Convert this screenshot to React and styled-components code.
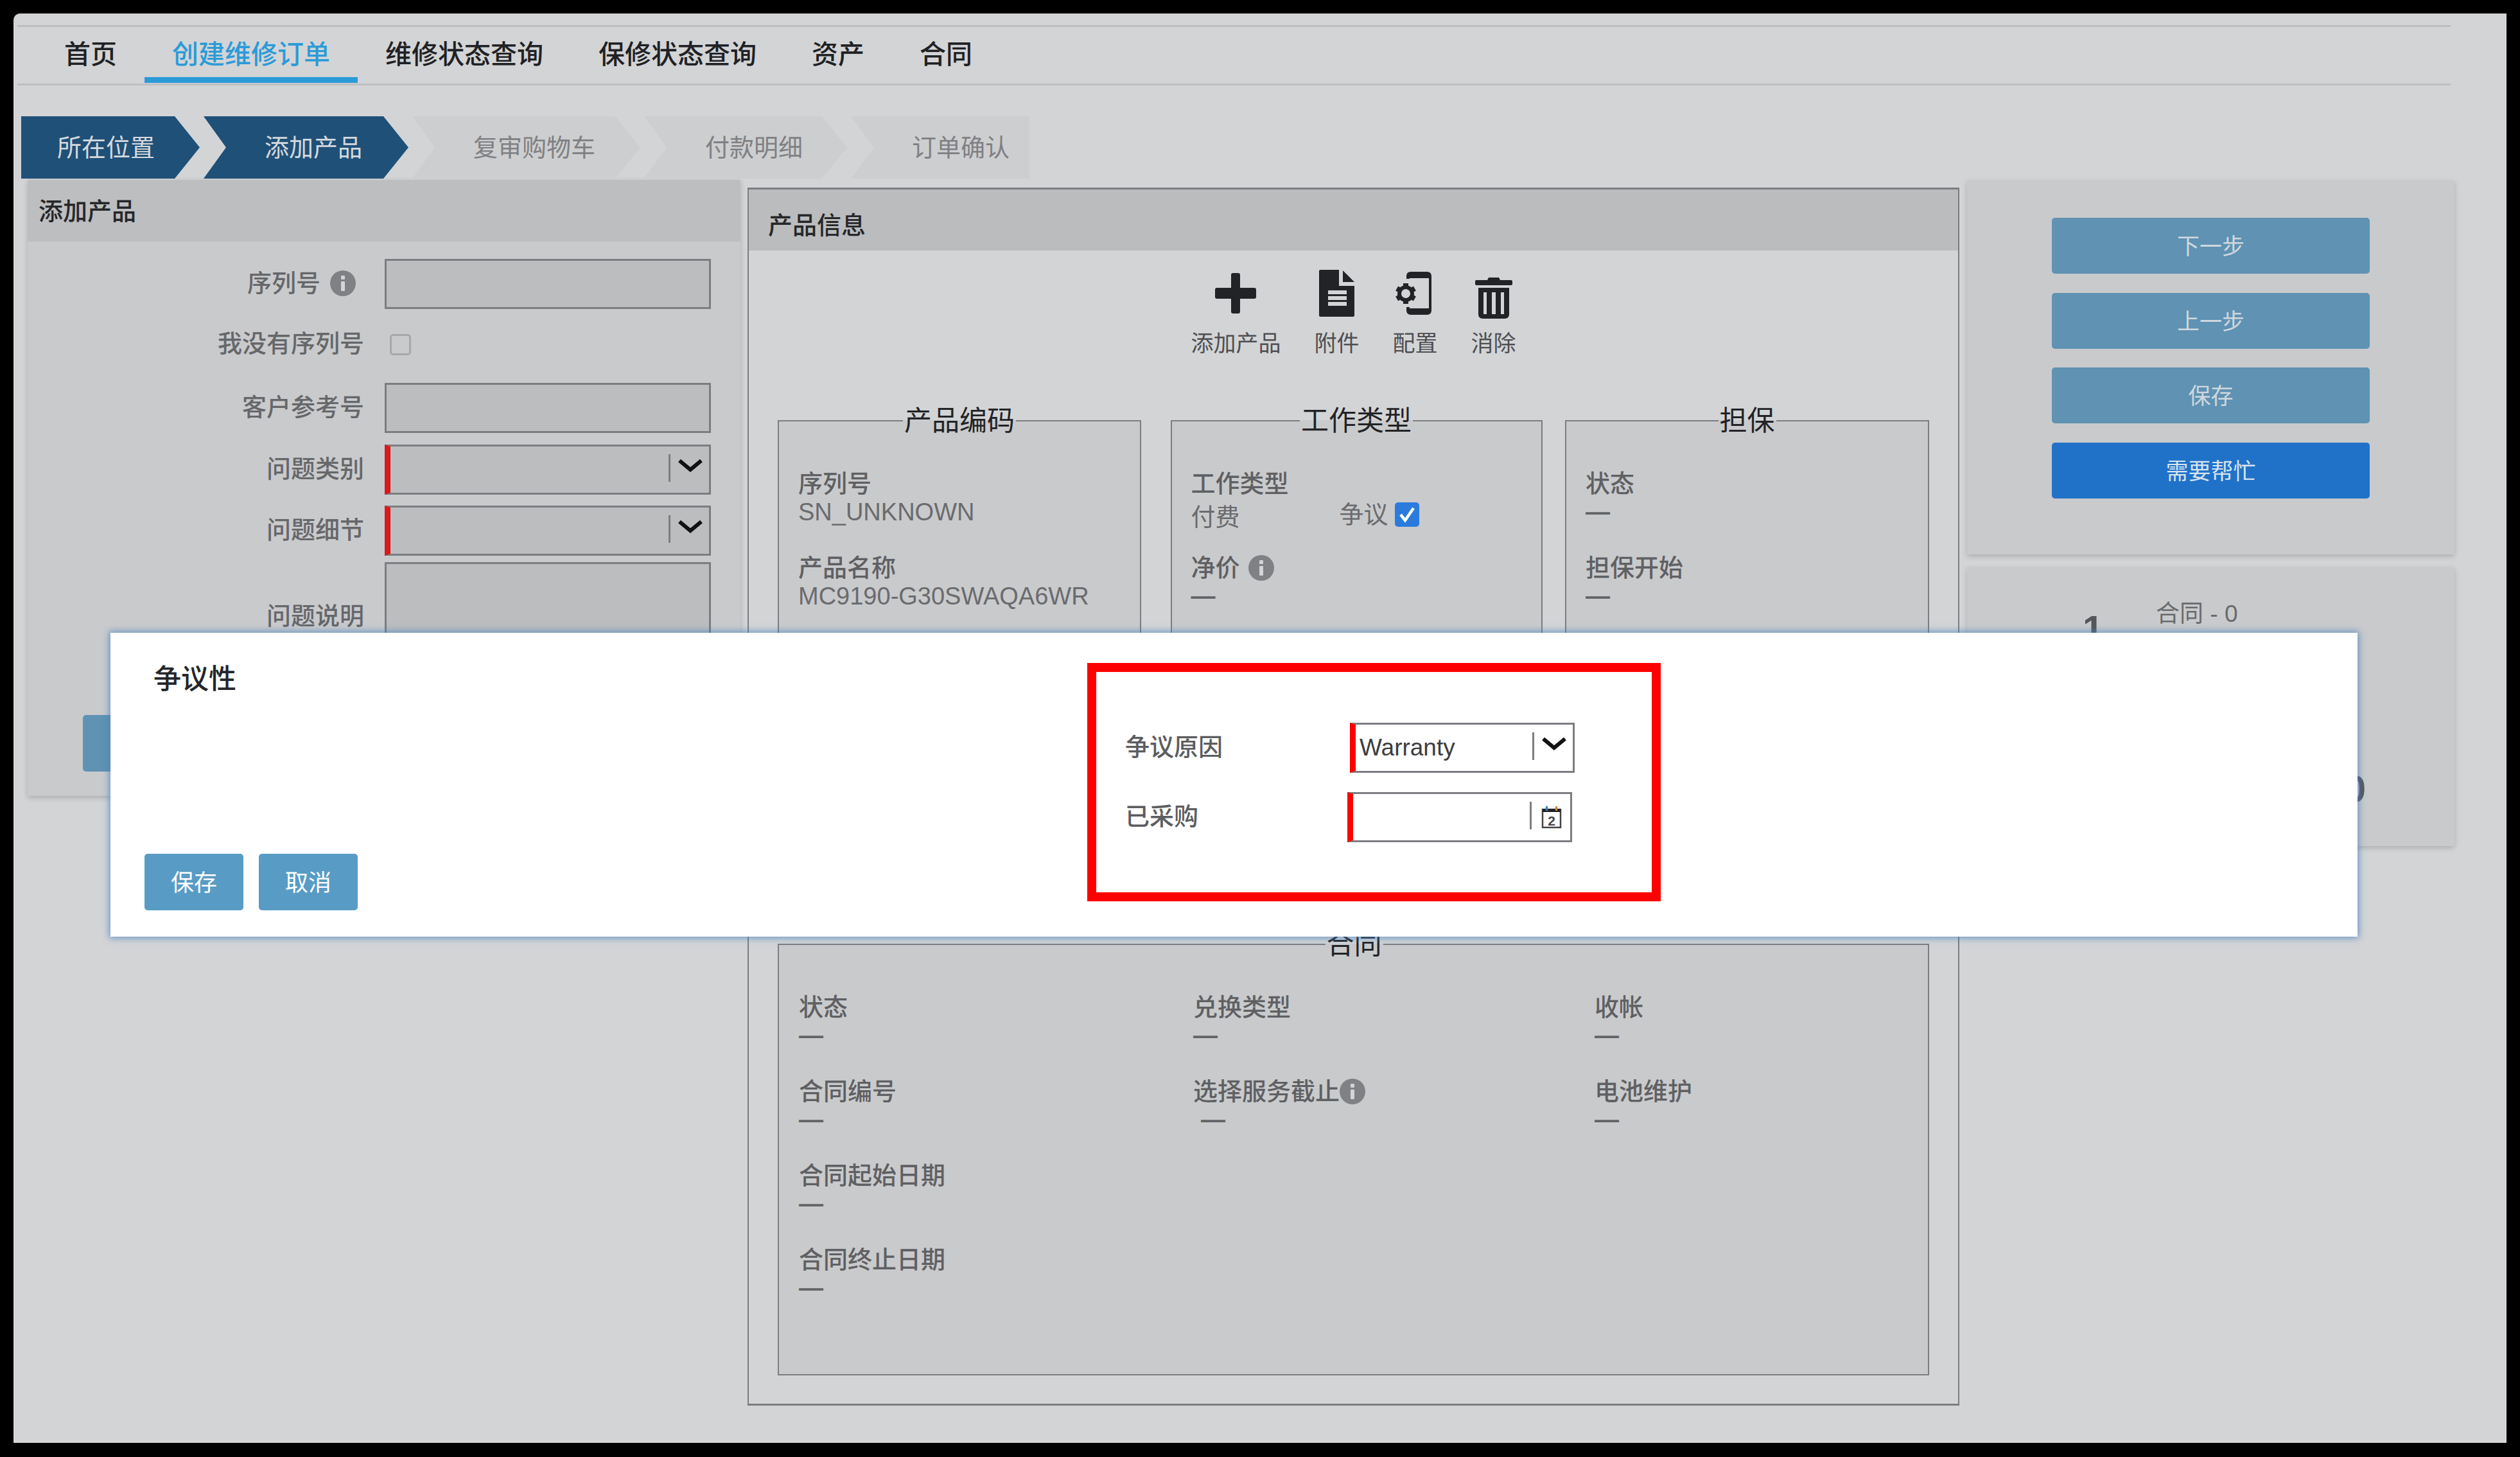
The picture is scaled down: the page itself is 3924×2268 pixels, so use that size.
import React from "react";
import styled, { createGlobalStyle } from "styled-components";

const GlobalStyle = createGlobalStyle`
  html, body {
    margin: 0;
    padding: 0;
    background: #000;
  }
  * {
    box-sizing: border-box;
  }
  body {
    font-family: "Liberation Sans", "Noto Sans CJK SC", sans-serif;
  }
`;

const tabs = ["首页", "创建维修订单", "维修状态查询", "保修状态查询", "资产", "合同"];

const steps = [
  { label: "所在位置", width: 278, active: true, first: true },
  { label: "添加产品", width: 319, active: true },
  { label: "复审购物车", width: 355 },
  { label: "付款明细", width: 316 },
  { label: "订单确认", width: 278, last: true },
];

const InfoIcon = () => (
  <InfoSvg viewBox="0 0 40 40">
    <circle cx="20" cy="20" r="20" fill="#808184" />
    <rect x="17" y="8" width="6" height="6" rx="1" fill="#d3d4d6" />
    <rect x="17" y="17" width="6" height="15" rx="1" fill="#d3d4d6" />
  </InfoSvg>
);

const Chevron = () => (
  <ChevronSvg viewBox="0 0 40 20">
    <polyline points="3,2 20,16 37,2" fill="none" stroke="#111" strokeWidth="6" />
  </ChevronSvg>
);

const CalendarIcon = () => (
  <CalendarSvg viewBox="0 0 32 36">
    <rect x="2" y="6" width="28" height="28" fill="#fff" stroke="#444" strokeWidth="2.5" />
    <rect x="2" y="5" width="28" height="5" fill="#222" />
    <rect x="7" y="1" width="3" height="7" fill="#3a7cc0" />
    <rect x="22" y="1" width="3" height="7" fill="#c98a3a" />
    <text x="16" y="31" textAnchor="middle" fontSize="21" fontWeight="700" fill="#444" fontFamily="Liberation Sans">
      2
    </text>
  </CalendarSvg>
);

const PlusIcon = () => (
  <ToolSvg width="64" viewBox="0 0 64 76">
    <g transform="translate(0 5)">
      <path
        fill="#222326"
        d="M25 3a3 3 0 0 1 3-3h8a3 3 0 0 1 3 3v20h22a3 3 0 0 1 3 3v11a3 3 0 0 1-3 3H39v20a3 3 0 0 1-3 3h-8a3 3 0 0 1-3-3V40H3a3 3 0 0 1-3-3V26a3 3 0 0 1 3-3h22z"
      />
    </g>
  </ToolSvg>
);

const DocIcon = () => (
  <ToolSvg width="55" viewBox="0 0 55 76">
    <path
      fill="#222326"
      fillRule="evenodd"
      d="M0 2Q0 0 2 0H31V25H55V71Q55 73 53 73H2Q0 73 0 71ZM14 32V38H43V32ZM14 41V47H43V41ZM14 50V56H43V50Z"
    />
    <path fill="#222326" d="M37 1L55 19H37Z" />
  </ToolSvg>
);

const ConfigIcon = () => (
  <ToolSvg width="62" viewBox="0 0 62 76">
    <g transform="translate(0 3)" fill="#222326">
      <path d="M17 11V7Q17 0 24 0H49Q56 0 56 7V60Q56 67 49 67H24Q17 67 17 60V55H22V57H52V10H22V11Z" />
      <g transform="translate(16 34)">
        <circle r="10" fill="none" stroke="#222326" strokeWidth="6" />
        {[0, 60, 120, 180, 240, 300].map((a) => (
          <rect key={a} x="-4" y="-16" width="8" height="7" transform={`rotate(${a})`} />
        ))}
      </g>
    </g>
  </ToolSvg>
);

const TrashIcon = () => (
  <ToolSvg width="58" viewBox="0 0 58 76">
    <g transform="translate(0 12)" fill="#222326">
      <path d="M21 0H37L39 4H56Q58 4 58 6V10Q58 12 56 12H2Q0 12 0 10V6Q0 4 2 4H19Z" />
      <path
        fillRule="evenodd"
        d="M5 16H53V57Q53 64 46 64H12Q5 64 5 57ZM13 23V57H18V23ZM26 23V57H32V23ZM40 23V57H45V23Z"
      />
    </g>
  </ToolSvg>
);

const CheckIcon = () => (
  <CheckSvg viewBox="0 0 38 38">
    <rect width="38" height="38" rx="5" fill="#2b7bdc" />
    <polyline points="9,19 16,28 29,9" fill="none" stroke="#fff" strokeWidth="4.5" />
  </CheckSvg>
);

const SelectBox = ({ value, dark }) => (
  <Select $dark={dark}>
    <SelectValue>{value}</SelectValue>
    <FieldDivider />
    <Chevron />
  </Select>
);

const Field = ({ label, value = "—", info, gap, indent }) => (
  <FieldBlock>
    <FieldLabel $gap={gap}>
      {label}
      {info && <InfoIcon />}
    </FieldLabel>
    <FieldValue $indent={indent} $dash={value === "—"}>
      {value}
    </FieldValue>
  </FieldBlock>
);

export default function App() {
  return (
    <Page>
      <GlobalStyle />
      <Screen>
        <TopRule />
        <Nav>
          {tabs.map((t, i) => (
            <Tab key={t} $active={i === 1}>
              {t}
            </Tab>
          ))}
        </Nav>

        <Steps>
          {steps.map((s) => (
            <Step key={s.label} $width={s.width} $active={s.active} $first={s.first} $last={s.last}>
              {s.label}
            </Step>
          ))}
        </Steps>

        <Columns>
          <LeftPanel>
            <PanelHead>添加产品</PanelHead>
            <FormBody>
              <FormRow>
                <FormLabel $info>
                  序列号
                  <InfoIcon />
                </FormLabel>
                <TextBox />
              </FormRow>
              <FormRow $mt={16}>
                <FormLabel>我没有序列号</FormLabel>
                <EmptyCheck />
              </FormRow>
              <FormRow $mt={21}>
                <FormLabel>客户参考号</FormLabel>
                <TextBox />
              </FormRow>
              <FormRow $mt={18}>
                <FormLabel>问题类别</FormLabel>
                <SelectBox dark />
              </FormRow>
              <FormRow $mt={17}>
                <FormLabel>问题细节</FormLabel>
                <SelectBox dark />
              </FormRow>
              <FormRow $mt={10} $top>
                <FormLabel $top>问题说明</FormLabel>
                <TextArea />
              </FormRow>
              <AddButton />
            </FormBody>
          </LeftPanel>

          <CenterPanel>
            <CenterHead>产品信息</CenterHead>
            <Toolbar>
              <Tool>
                <PlusIcon />
                <ToolLabel>添加产品</ToolLabel>
              </Tool>
              <Tool>
                <DocIcon />
                <ToolLabel>附件</ToolLabel>
              </Tool>
              <Tool>
                <ConfigIcon />
                <ToolLabel>配置</ToolLabel>
              </Tool>
              <Tool>
                <TrashIcon />
                <ToolLabel>消除</ToolLabel>
              </Tool>
            </Toolbar>

            <BoxRow>
              <Box>
                <BoxTitle>产品编码</BoxTitle>
                <Field label="序列号" value="SN_UNKNOWN" />
                <Field label="产品名称" value="MC9190-G30SWAQA6WR" />
              </Box>
              <Box $shift>
                <BoxTitle>工作类型</BoxTitle>
                <FieldBlock>
                  <FieldLabel>工作类型</FieldLabel>
                  <WorkRow>
                    <span>付费</span>
                    <Dispute>
                      争议
                      <CheckIcon />
                    </Dispute>
                  </WorkRow>
                </FieldBlock>
                <Field label="净价" info gap />
              </Box>
              <Box>
                <BoxTitle>担保</BoxTitle>
                <Field label="状态" />
                <Field label="担保开始" />
              </Box>
            </BoxRow>

            <ContractBox>
              <BoxTitle>合同</BoxTitle>
              <ContractGrid>
                <Field label="状态" />
                <Field label="兑换类型" />
                <Field label="收帐" />
                <Field label="合同编号" />
                <Field label="选择服务截止" info indent />
                <Field label="电池维护" />
                <Field label="合同起始日期" />
                <Spacer />
                <Spacer />
                <Field label="合同终止日期" />
              </ContractGrid>
            </ContractBox>
          </CenterPanel>

          <RightColumn>
            <ActionPanel>
              <ActionButton>下一步</ActionButton>
              <ActionButton>上一步</ActionButton>
              <ActionButton>保存</ActionButton>
              <ActionButton $help>需要帮忙</ActionButton>
            </ActionPanel>
            <SummaryPanel>
              <SummaryTop>
                <SummaryDigit>1</SummaryDigit>
                <SummaryLabel>合同 - 0</SummaryLabel>
              </SummaryTop>
              <SummaryBottom>0</SummaryBottom>
            </SummaryPanel>
          </RightColumn>
        </Columns>
      </Screen>

      <Modal>
        <ModalSide>
          <ModalTitle>争议性</ModalTitle>
          <ModalButtons>
            <ModalButton>保存</ModalButton>
            <ModalButton>取消</ModalButton>
          </ModalButtons>
        </ModalSide>
        <Highlight>
          <HighlightRow>
            <HighlightLabel>争议原因</HighlightLabel>
            <SelectBox value="Warranty" />
          </HighlightRow>
          <HighlightRow>
            <HighlightLabel>已采购</HighlightLabel>
            <DateBox>
              <SelectValue />
              <FieldDivider />
              <CalendarIcon />
            </DateBox>
          </HighlightRow>
        </Highlight>
      </Modal>
    </Page>
  );
}

const Page = styled.div`
  position: relative;
  width: 3924px;
  height: 2268px;
  padding: 21px 21px 22px 21px;
  background: #000;
  overflow: hidden;
`;
const Screen = styled.div`
  height: 100%;
  padding: 18px 0 0 6px;
  background: #d3d4d6;
  border-top-left-radius: 10px;
`;
const TopRule = styled.div`
  width: 3789px;
  height: 3px;
  background: #bdbec0;
`;
const Nav = styled.nav`
  display: flex;
  width: 3789px;
  padding: 0 0 1px 30px;
  border-bottom: 3px solid #bfc0c2;
`;
const Tab = styled.div`
  height: 87px;
  padding: 8px 43px 0;
  font-size: 41px;
  line-height: 70px;
  font-weight: 500;
  color: ${({ $active }) => ($active ? "#2b9bd8" : "#202124")};
  border-bottom: 9px solid ${({ $active }) => ($active ? "#2b9bd8" : "transparent")};
`;
const Steps = styled.div`
  display: flex;
  gap: 6px;
  height: 97px;
  margin: 48px 0 0 6px;
`;
const Step = styled.div`
  display: flex;
  align-items: center;
  width: ${({ $width }) => $width}px;
  padding-left: ${({ $first }) => ($first ? 56 : 95)}px;
  padding-bottom: 6px;
  font-size: 38px;
  color: ${({ $active }) => ($active ? "#d5d9de" : "#7f8083")};
  background: ${({ $active }) => ($active ? "#1f5078" : "#cdced0")};
  clip-path: ${({ $first, $last }) =>
    $first
      ? "polygon(0 0, calc(100% - 39px) 0, 100% 50%, calc(100% - 39px) 100%, 0 100%)"
      : $last
      ? "polygon(0 0, 100% 0, 100% 100%, 0 100%, 36px 50%)"
      : "polygon(0 0, calc(100% - 39px) 0, 100% 50%, calc(100% - 39px) 100%, 0 100%, 35px 50%)"};
`;
const Columns = styled.div`
  display: flex;
  align-items: flex-start;
  margin: 2px 0 0 16px;
`;
const LeftPanel = styled.section`
  width: 1110px;
  background: #c9cacc;
  box-shadow: 0 3px 8px rgba(0, 0, 0, 0.18);
`;
const PanelHead = styled.div`
  display: flex;
  align-items: center;
  height: 96px;
  padding: 0 0 6px 17px;
  font-size: 38px;
  font-weight: 500;
  color: #26272a;
  background: #bdbec0;
`;
const FormBody = styled.div`
  display: flex;
  flex-direction: column;
  padding: 27px 0 38px;
`;
const FormRow = styled.div`
  display: flex;
  align-items: ${({ $top }) => ($top ? "flex-start" : "center")};
  height: ${({ $top }) => ($top ? "200px" : "78px")};
  margin-top: ${({ $mt }) => $mt || 0}px;
`;
const FormLabel = styled.div`
  display: flex;
  align-items: center;
  justify-content: flex-end;
  gap: 15px;
  width: ${({ $info }) => ($info ? 511 : 524)}px;
  margin-top: ${({ $top }) => ($top ? 62 : 0)}px;
  margin-right: ${({ $info }) => ($info ? 45 : 32)}px;
  padding-bottom: 3px;
  font-size: 38px;
  line-height: 44px;
  font-weight: 500;
  color: #66676a;
`;
const TextBox = styled.div`
  width: 508px;
  height: 78px;
  background: #bcbdbf;
  border: 3px solid #7b7d81;
`;
const TextArea = styled(TextBox)`
  height: 200px;
`;
const EmptyCheck = styled.div`
  width: 33px;
  height: 33px;
  margin-left: 8px;
  border: 3px solid #a7a8ab;
  border-radius: 5px;
`;
const AddButton = styled.div`
  width: 300px;
  height: 88px;
  margin: 38px 0 0 86px;
  background: #5f92b3;
  border-radius: 5px;
`;
const InfoSvg = styled.svg`
  flex: none;
  width: 40px;
  height: 40px;
`;
const CenterPanel = styled.section`
  width: 1887px;
  margin: 12px 0 0 11px;
  padding-bottom: 44px;
  border: 3px solid #7b7d81;
  border-width: 3px 2px 3px 2px;
`;
const CenterHead = styled.div`
  display: flex;
  align-items: center;
  height: 95px;
  padding: 9px 0 0 30px;
  font-size: 38px;
  font-weight: 500;
  color: #26272a;
  background: #bbbcbe;
`;
const Toolbar = styled.div`
  display: flex;
  justify-content: center;
  gap: 52px;
  padding-top: 30px;
`;
const Tool = styled.div`
  display: flex;
  flex-direction: column;
  align-items: center;
  gap: 17px;
  min-width: 70px;
`;
const ToolSvg = styled.svg`
  display: block;
  height: 76px;
`;
const ToolLabel = styled.div`
  font-size: 35px;
  line-height: 44px;
  color: #4e4f52;
`;
const BoxRow = styled.div`
  display: grid;
  grid-template-columns: 566px 579px 567px;
  justify-content: space-between;
  height: 797px;
  margin: 76px 45px 0;
`;
const Box = styled.fieldset`
  min-width: 0;
  margin: 0 ${({ $shift }) => ($shift ? "-5px 0 5px" : "0")};
  padding: 54px 30px 0;
  background: #c9cacc;
  border: 2px solid #7b7d81;
`;
const BoxTitle = styled.legend`
  margin: 0 auto;
  padding: 0 2px;
  font-size: 43px;
  line-height: 44px;
  color: #222326;
`;
const FieldBlock = styled.div`
  margin-bottom: 43px;
`;
const FieldLabel = styled.div`
  display: flex;
  align-items: center;
  gap: ${({ $gap }) => ($gap ? 13 : 0)}px;
  font-size: 38px;
  line-height: 44px;
  height: 44px;
  font-weight: 500;
  color: #5f6063;
  white-space: nowrap;
`;
const FieldValue = styled.div`
  margin-left: ${({ $indent }) => ($indent ? 12 : 0)}px;
  font-size: 38px;
  line-height: 44px;
  height: 44px;
  font-weight: ${({ $dash }) => ($dash ? 700 : 400)};
  color: ${({ $dash }) => ($dash ? "#636467" : "#6a6b6e")};
  white-space: nowrap;
`;
const WorkRow = styled(FieldValue)`
  display: grid;
  grid-template-columns: 231px auto;
  margin-top: 8px;
  margin-bottom: -8px;
`;
const Dispute = styled.span`
  display: flex;
  align-items: center;
  gap: 10px;
  margin-top: -8px;
`;
const CheckSvg = styled.svg`
  width: 38px;
  height: 38px;
`;
const ContractBox = styled(Box)`
  display: block;
  height: 693px;
  margin: 18px 45px 0;
  padding: 54px 29px 0 31px;
`;
const ContractGrid = styled.div`
  display: grid;
  grid-template-columns: 614px 625px 1fr;
`;
const Spacer = styled.div``;
const RightColumn = styled.div`
  display: flex;
  flex-direction: column;
  gap: 20px;
  width: 759px;
  margin: 1px 0 0 12px;
`;
const ActionPanel = styled.section`
  display: flex;
  flex-direction: column;
  align-items: center;
  gap: 29.5px;
  padding: 58px 0 87px;
  background: #c9cacc;
  box-shadow: 0 3px 8px rgba(0, 0, 0, 0.18);
`;
const ActionButton = styled.div`
  display: flex;
  align-items: center;
  justify-content: center;
  width: 495px;
  height: 87px;
  padding-bottom: 4px;
  font-size: 35px;
  color: ${({ $help }) => ($help ? "#d8e4f0" : "#cfd8de")};
  background: ${({ $help }) => ($help ? "#2072c8" : "#5f92b3")};
  border-radius: 5px;
`;
const SummaryPanel = styled.section`
  height: 434px;
  padding: 51px 138px 54px 180px;
  background: #c9cacc;
  box-shadow: 0 3px 8px rgba(0, 0, 0, 0.18);
`;
const SummaryTop = styled.div`
  display: flex;
  height: 80px;
`;
const SummaryDigit = styled.div`
  width: 114px;
  margin-top: 10px;
  font-size: 58px;
  line-height: 70px;
  font-weight: 700;
  color: #55565a;
`;
const SummaryLabel = styled.div`
  font-size: 37px;
  line-height: 44px;
  color: #6a6b6e;
`;
const SummaryBottom = styled(SummaryDigit)`
  width: auto;
  margin-top: 179px;
  text-align: right;
`;
const Modal = styled.div`
  position: absolute;
  top: 985px;
  left: 172px;
  display: flex;
  align-items: flex-start;
  width: 3499px;
  height: 473px;
  padding: 47px 0 41px 53px;
  background: #fff;
  box-shadow: 0 0 10px 2px rgba(70, 130, 190, 0.75);
`;
const ModalSide = styled.div`
  display: flex;
  flex-direction: column;
  justify-content: space-between;
  width: 1468px;
  height: 100%;
`;
const ModalTitle = styled.div`
  margin-left: 14px;
  font-size: 43px;
  line-height: 50px;
  font-weight: 500;
  color: #24262b;
`;
const ModalButtons = styled.div`
  display: flex;
  gap: 24px;
`;
const ModalButton = styled.div`
  display: flex;
  align-items: center;
  justify-content: center;
  width: 154px;
  height: 88px;
  padding-bottom: 4px;
  font-size: 36px;
  color: #fff;
  background: #589cc6;
  border-radius: 5px;
`;
const Highlight = styled.div`
  display: flex;
  flex-direction: column;
  gap: 30px;
  width: 893px;
  height: 371px;
  margin-top: 0;
  padding: 79px 0 0 45px;
  border: 14px solid #f00;
`;
const HighlightRow = styled.div`
  display: flex;
  align-items: center;
`;
const HighlightLabel = styled.div`
  width: 350px;
  padding-bottom: 3px;
  font-size: 38px;
  line-height: 44px;
  font-weight: 500;
  color: #5c5d60;
`;
const Select = styled.div`
  display: flex;
  align-items: center;
  width: ${({ $dark }) => ($dark ? 508 : 350)}px;
  height: 78px;
  padding-right: 9px;
  background: ${({ $dark }) => ($dark ? "#bcbdbf" : "#fff")};
  border: 3px solid #7b7d81;
  border-left: 9px solid ${({ $dark }) => ($dark ? "#d9191d" : "#f00")};
`;
const SelectValue = styled.div`
  flex: 1;
  padding-left: 6px;
  font-size: 37px;
  color: #3c3d40;
`;
const FieldDivider = styled.div`
  flex: none;
  width: 3px;
  height: 43px;
  margin-bottom: 6px;
  background: #7b7d81;
`;
const ChevronSvg = styled.svg`
  flex: none;
  width: 40px;
  height: 20px;
  margin: 0 0 12px 11px;
`;
const DateBox = styled(Select)`
  margin-left: -4px;
  padding-right: 13px;
`;
const CalendarSvg = styled.svg`
  flex: none;
  width: 32px;
  height: 36px;
  margin-left: 15px;
`;
